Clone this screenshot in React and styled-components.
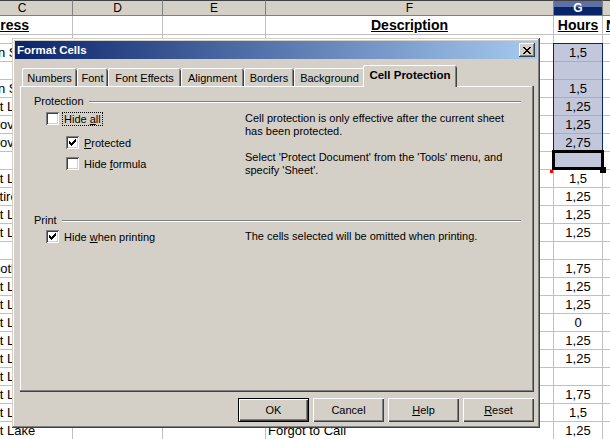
import React from 'react';
import styled, { createGlobalStyle, css } from 'styled-components';

const GlobalStyle = createGlobalStyle`
  html, body {
    margin: 0;
    padding: 0;
    background: #fff;
  }
  body {
    width: 610px;
    height: 439px;
    overflow: hidden;
    font-family: "Liberation Sans", Arial, sans-serif;
  }
`;

// ---------- spreadsheet behind the dialog ----------
const Screen = styled.div`
  position: relative;
  width: 610px;
  height: 439px;
  overflow: hidden;
  background: #fff;
`;

const Sheet = styled.div`
  display: grid;
  grid-template-columns: 101px 90px 103px 288px 49px 60px;
  grid-template-rows: 16px 19px 9px repeat(22, 18px);
  margin-left: -28px;
  width: max-content;
  font-family: "Liberation Sans", Arial, sans-serif;
  color: #000;
`;

const HeadCell = styled.div`
  box-sizing: border-box;
  border-top: 1px solid #404040;
  border-right: 1px solid #808080;
  border-bottom: 1px solid #808080;
  background: ${p => (p.$active ? 'linear-gradient(#5d70a6 0 45%, #0a246a 45%)' : '#d4d0c8')};
  color: ${p => (p.$active ? '#fff' : '#000')};
  font-weight: ${p => (p.$active ? 'bold' : 'normal')};
  font-size: 12px;
  line-height: 1;
  display: flex;
  align-items: center;
  justify-content: center;
`;

const Cell = styled.div`
  box-sizing: border-box;
  border-right: 1px solid ${p => (p.$sel ? '#a9adc4' : '#c0c0c0')};
  border-bottom: 1px solid ${p => (p.$sel ? '#a9adc4' : '#c0c0c0')};
  background: ${p => (p.$sel ? '#c3c7dc' : '#fff')};
  font-size: 13px;
  white-space: nowrap;
  overflow: hidden;
  display: flex;
  align-items: center;
  justify-content: ${p => (p.$center ? 'center' : 'flex-start')};
  padding-left: ${p => p.$indent || 0}px;
`;

const HeadingText = styled.span`
  font-size: 14px;
  font-weight: bold;
  text-decoration: underline;
`;

const SelectionFrame = styled.div`
  position: absolute;
  left: 553px;
  top: 43px;
  width: 50px;
  height: 108px;
  box-sizing: border-box;
  border: 1px solid #0a246a;
  border-bottom: none;
`;

const CursorBox = styled.div`
  position: absolute;
  left: 552px;
  top: 150px;
  width: 52px;
  height: 20px;
  box-sizing: border-box;
  border: 3px solid #000;
`;

const FillHandle = styled.div`
  position: absolute;
  left: 600px;
  top: 167px;
  width: 6px;
  height: 6px;
  background: #000;
`;

const RedMark = styled.div`
  position: absolute;
  left: 550px;
  top: 170px;
  width: 3px;
  height: 3px;
  background: #f00;
`;

// ---------- dialog ----------
const Dialog = styled.div`
  position: absolute;
  left: 12px;
  top: 38px;
  width: 528px;
  height: 390px;
  box-sizing: border-box;
  padding: 3px;
  background: #d4d0c8;
  box-shadow: inset -1px -1px 0 #404040, inset 1px 1px 0 #d4d0c8, inset -2px -2px 0 #808080,
    inset 2px 2px 0 #fff;
  display: flex;
  flex-direction: column;
  font-family: "Liberation Sans", Arial, sans-serif;
  font-size: 11px;
  color: #000;
`;

const TitleBar = styled.div`
  flex: none;
  height: 18px;
  padding: 0 2px;
  display: flex;
  align-items: center;
  justify-content: space-between;
  background: linear-gradient(to right, #0a246a, #a6caf0);
`;

const TitleText = styled.span`
  color: #fff;
  font-weight: bold;
  font-size: 11.5px;
`;

const CloseButton = styled.div`
  width: 16px;
  height: 14px;
  box-sizing: border-box;
  background: #d4d0c8;
  box-shadow: inset -1px -1px 0 #404040, inset 1px 1px 0 #fff, inset -2px -2px 0 #808080;
  display: flex;
  align-items: center;
  justify-content: center;
  padding-right: 1px;
`;

const DialogBody = styled.div`
  flex: 1;
  padding: 6px 3px 0 5px;
  display: flex;
  flex-direction: column;
`;

const TabStrip = styled.div`
  height: 21px;
  padding-left: 2px;
  display: flex;
  align-items: flex-end;
  position: relative;
  z-index: 1;
`;

const Tab = styled.div`
  box-sizing: border-box;
  width: ${p => p.$w}px;
  height: 18px;
  background: #d4d0c8;
  border-radius: 2px 2px 0 0;
  box-shadow: inset 1px 0 0 #fff, inset 0 1px 0 #fff, inset -1px 0 0 #404040, inset -2px 0 0 #808080;
  display: flex;
  align-items: center;
  justify-content: center;
  padding-top: 1px;
  white-space: nowrap;
  position: relative;

  ${p =>
    p.$active &&
    css`
      height: 22px;
      margin: 0 -2px -1px;
      z-index: 2;
      font-weight: bold;
      font-size: 11.5px;
      padding-top: 0;
      padding-bottom: 2px;
    `}
`;

const Panel = styled.div`
  box-sizing: border-box;
  height: 306px;
  padding: 1px 13px 0 14px;
  background: #d4d0c8;
  box-shadow: inset -1px -1px 0 #404040, inset -2px -2px 0 #808080, inset 1px 1px 0 #fff;
`;

const SectionHead = styled.div`
  height: 13px;
  margin-top: ${p => p.$top}px;
  display: flex;
  align-items: center;
  gap: 5px;
  line-height: 13px;
`;

const Rule = styled.div`
  flex: 1;
  height: 0;
  border-top: 1px solid #808080;
  border-bottom: 1px solid #fff;
`;

const GroupBody = styled.div`
  display: grid;
  grid-template-columns: 199px 1fr;
  margin-top: ${p => p.$top}px;
  padding-left: 12px;
`;

const Checks = styled.div`
  display: flex;
  flex-direction: column;
`;

const CheckRow = styled.div`
  height: 13px;
  display: flex;
  align-items: center;
  margin-top: ${p => p.$top || 0}px;
  padding-left: ${p => p.$indent || 0}px;
`;

const Box = styled.span`
  flex: none;
  width: 13px;
  height: 13px;
  box-sizing: border-box;
  background: #fff;
  box-shadow: inset 1px 1px 0 #808080, inset -1px -1px 0 #fff, inset 2px 2px 0 #404040,
    inset -2px -2px 0 #d4d0c8;
  display: flex;
  align-items: center;
  justify-content: center;
`;

const Label = styled.span`
  margin-left: 3px;
  padding: 0 1px;
  border: 1px dotted ${p => (p.$focus ? '#000' : 'transparent')};
  line-height: 12px;
  white-space: nowrap;
`;

const Notes = styled.div`
  display: flex;
  flex-direction: column;
`;

const Note = styled.p`
  margin: ${p => p.$top || 0}px 0 0;
  line-height: 13px;
  white-space: nowrap;
`;

const ButtonRow = styled.div`
  margin-top: 6px;
  display: flex;
  justify-content: flex-end;
  gap: 4px;
`;

const Button = styled.div`
  box-sizing: border-box;
  width: 71px;
  height: 24px;
  background: #d4d0c8;
  display: flex;
  align-items: center;
  justify-content: center;
  box-shadow: inset 1px 1px 0 #fff, inset -1px -1px 0 #404040, inset -2px -2px 0 #808080;
  ${p =>
    p.$default &&
    css`
      border: 1px solid #000;
    `}
`;

const CloseGlyph = () => (
  <svg width="8" height="7" viewBox="0 0 8 7" shapeRendering="crispEdges">
    <path
      fill="#000"
      d="M0 0h2v1H0z M6 0h2v1H6z M1 1h2v1H1z M5 1h2v1H5z M2 2h4v1H2z M3 3h2v1H3z M2 4h4v1H2z M1 5h2v1H1z M5 5h2v1H5z M0 6h2v1H0z M6 6h2v1H6z"
    />
  </svg>
);

const Tick = () => (
  <svg width="7" height="7" viewBox="0 0 7 7" shapeRendering="crispEdges">
    <path
      fill="#000"
      d="M6 0h1v1H6z M5 1h2v1H5z M0 2h1v1H0z M4 2h3v1H4z M0 3h2v1H0z M3 3h3v1H3z M0 4h5v1H0z M1 5h3v1H1z M2 6h1v1H2z"
    />
  </svg>
);

const Check = ({ checked, focus, children, top, indent }) => (
  <CheckRow $top={top} $indent={indent}>
    <Box>{checked && <Tick />}</Box>
    <Label $focus={focus}>{children}</Label>
  </CheckRow>
);

const rows = [
  { c: 'Main St', ci: 5, g: '1,5' },
  { c: '', g: '' },
  { c: 'Main St', ci: 5, g: '1,5' },
  { c: 'Salt Lake', ci: 9, g: '1,25' },
  { c: 'Provo', ci: 15, g: '1,25' },
  { c: 'Provo', ci: 15, g: '2,75' },
  { c: '', g: '' },
  { c: 'Salt Lake', ci: 9, g: '1,5' },
  { c: 'Retired', ci: 11, g: '1,25' },
  { c: 'Salt Lake', ci: 9, g: '1,25' },
  { c: 'Salt Lake', ci: 9, g: '1,25' },
  { c: '', g: '' },
  { c: 'Scotland', ci: 13, g: '1,75' },
  { c: 'Salt Lake', ci: 9, g: '1,25' },
  { c: 'Salt Lake', ci: 9, g: '1,25' },
  { c: 'Salt Lake', ci: 9, g: '0' },
  { c: 'Salt Lake', ci: 9, g: '1,25' },
  { c: 'Salt Lake', ci: 9, g: '1,25' },
  { c: 'Salt Lake', ci: 9, g: '' },
  { c: 'Salt Lake', ci: 9, g: '1,75' },
  { c: 'Salt Lake', ci: 9, g: '1,5' },
  { c: 'Salt Lake', ci: 9, g: '1,25', f: 'Forgot to Call' },
];

const tabs = [
  { label: 'Numbers', w: 55 },
  { label: 'Font', w: 31 },
  { label: 'Font Effects', w: 73 },
  { label: 'Alignment', w: 63 },
  { label: 'Borders', w: 50 },
  { label: 'Background', w: 71 },
  { label: 'Cell Protection', w: 94, active: true },
];

const App = () => {
  return (
    <Screen>
      <GlobalStyle />
      <Sheet>
        <HeadCell>C</HeadCell>
        <HeadCell>D</HeadCell>
        <HeadCell>E</HeadCell>
        <HeadCell>F</HeadCell>
        <HeadCell $active>G</HeadCell>
        <HeadCell>H</HeadCell>

        <Cell $indent={1}><HeadingText>Address</HeadingText></Cell>
        <Cell />
        <Cell />
        <Cell $center><HeadingText>Description</HeadingText></Cell>
        <Cell $center><HeadingText>Hours</HeadingText></Cell>
        <Cell $indent={3}><HeadingText>Notes</HeadingText></Cell>

        <Cell />
        <Cell />
        <Cell />
        <Cell />
        <Cell />
        <Cell />

        {rows.map((r, i) => (
          <React.Fragment key={i}>
            <Cell $indent={r.ci}>{r.c}</Cell>
            <Cell />
            <Cell />
            <Cell $indent={2}>{r.f}</Cell>
            <Cell $center $sel={i < 7}>{r.g}</Cell>
            <Cell />
          </React.Fragment>
        ))}
      </Sheet>

      <SelectionFrame />
      <CursorBox />
      <RedMark />
      <FillHandle />

      <Dialog>
        <TitleBar>
          <TitleText>Format Cells</TitleText>
          <CloseButton>
            <CloseGlyph />
          </CloseButton>
        </TitleBar>

        <DialogBody>
          <TabStrip>
            {tabs.map(t => (
              <Tab key={t.label} $w={t.w} $active={t.active}>
                {t.label}
              </Tab>
            ))}
          </TabStrip>

          <Panel>
            <SectionHead $top={8}>
              <span>Protection</span>
              <Rule />
            </SectionHead>
            <GroupBody $top={4}>
              <Checks>
                <Check focus>
                  Hide <u>a</u>ll
                </Check>
                <Check checked top={11} indent={20}>
                  <u>P</u>rotected
                </Check>
                <Check top={8} indent={20}>
                  Hide <u>f</u>ormula
                </Check>
              </Checks>
              <Notes>
                <Note>
                  Cell protection is only effective after the current sheet
                  <br />
                  has been protected.
                </Note>
                <Note $top={13}>
                  Select 'Protect Document' from the 'Tools' menu, and
                  <br />
                  specify 'Sheet'.
                </Note>
              </Notes>
            </GroupBody>

            <SectionHead $top={37}>
              <span>Print</span>
              <Rule />
            </SectionHead>
            <GroupBody $top={3}>
              <Checks>
                <Check checked>
                  Hide <u>w</u>hen printing
                </Check>
              </Checks>
              <Notes>
                <Note>The cells selected will be omitted when printing.</Note>
              </Notes>
            </GroupBody>
          </Panel>

          <ButtonRow>
            <Button $default>OK</Button>
            <Button>Cancel</Button>
            <Button>
              <u>H</u>elp
            </Button>
            <Button>
              <u>R</u>eset
            </Button>
          </ButtonRow>
        </DialogBody>
      </Dialog>
    </Screen>
  );
};

export default App;
